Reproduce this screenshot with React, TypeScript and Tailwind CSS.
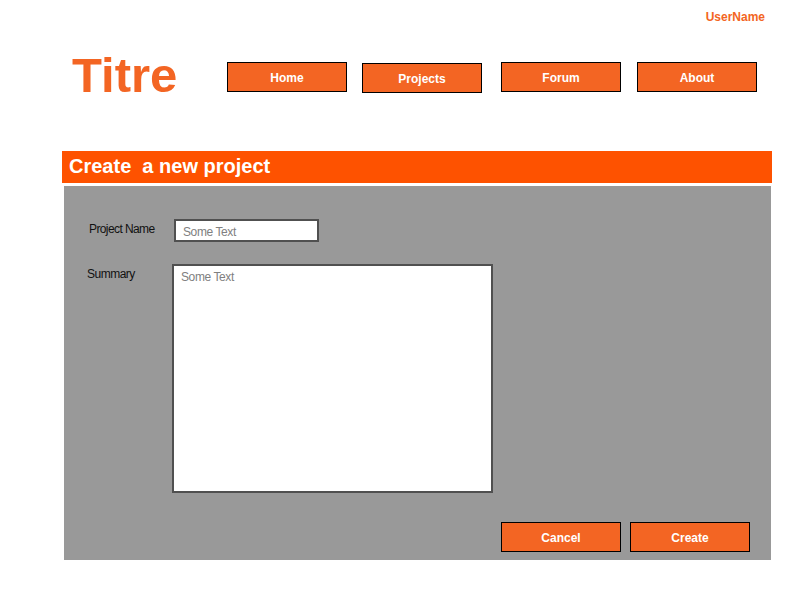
import React from "react";

const font = { fontFamily: '"Liberation Sans", Arial, sans-serif' };

function NavButton({ label, extra = "" }: { label: string; extra?: string }) {
  return (
    <div
      className={`w-[120px] h-[30px] border border-black bg-[#f36523] text-white text-[12px] font-bold flex items-center justify-center pt-[2px] ${extra}`}
    >
      {label}
    </div>
  );
}

export default function App() {
  return (
    <div className="w-[800px] h-[600px] bg-white overflow-hidden" style={font}>
      <div className="pt-[11px] pr-[35px] text-right text-[12px] leading-[12px] font-bold text-[#f36523]">
        UserName
      </div>

      <div className="mt-[28px] flex items-start h-[48px]">
        <div className="ml-[72px] w-[155px] text-[49px] leading-[48px] font-bold text-[#f36523]">
          Titre
        </div>
        <NavButton label="Home" extra="mt-[11px]" />
        <NavButton label="Projects" extra="mt-[12px] ml-[15px]" />
        <NavButton label="Forum" extra="mt-[11px] ml-[19px]" />
        <NavButton label="About" extra="mt-[11px] ml-[16px]" />
      </div>

      <div className="mt-[52px] ml-[62px] w-[710px] h-[32px] bg-[#fe5200] text-white text-[20px] leading-[30px] font-bold pl-[7px] whitespace-pre">
        {"Create  a new project"}
      </div>

      <div className="mt-[3px] ml-[64px] w-[707px] bg-[#999999] pt-[33px] pb-[8px] flex flex-col">
        <div className="flex items-start">
          <div className="ml-[25px] w-[85px] mt-[3px] text-[12px] leading-[14px] tracking-[-0.6px] text-[#111]">
            Project Name
          </div>
          <div className="w-[145px] h-[23px] border-2 border-[#505050] bg-white pl-[7px] pt-[2px] text-[12px] leading-[19px] tracking-[-0.4px] text-[#808080]">
            Some Text
          </div>
        </div>

        <div className="flex items-start mt-[22px]">
          <div className="ml-[23px] w-[85px] pt-[3px] text-[12px] leading-[14px] tracking-[-0.5px] text-[#111]">
            Summary
          </div>
          <div className="w-[321px] h-[229px] border-2 border-[#505050] bg-white pl-[7px] pt-[4px] text-[12px] leading-[14px] tracking-[-0.4px] text-[#808080]">
            Some Text
          </div>
        </div>

        <div className="flex justify-end mt-[29px] pr-[21px] gap-[9px]">
          <NavButton label="Cancel" />
          <NavButton label="Create" />
        </div>
      </div>
    </div>
  );
}
